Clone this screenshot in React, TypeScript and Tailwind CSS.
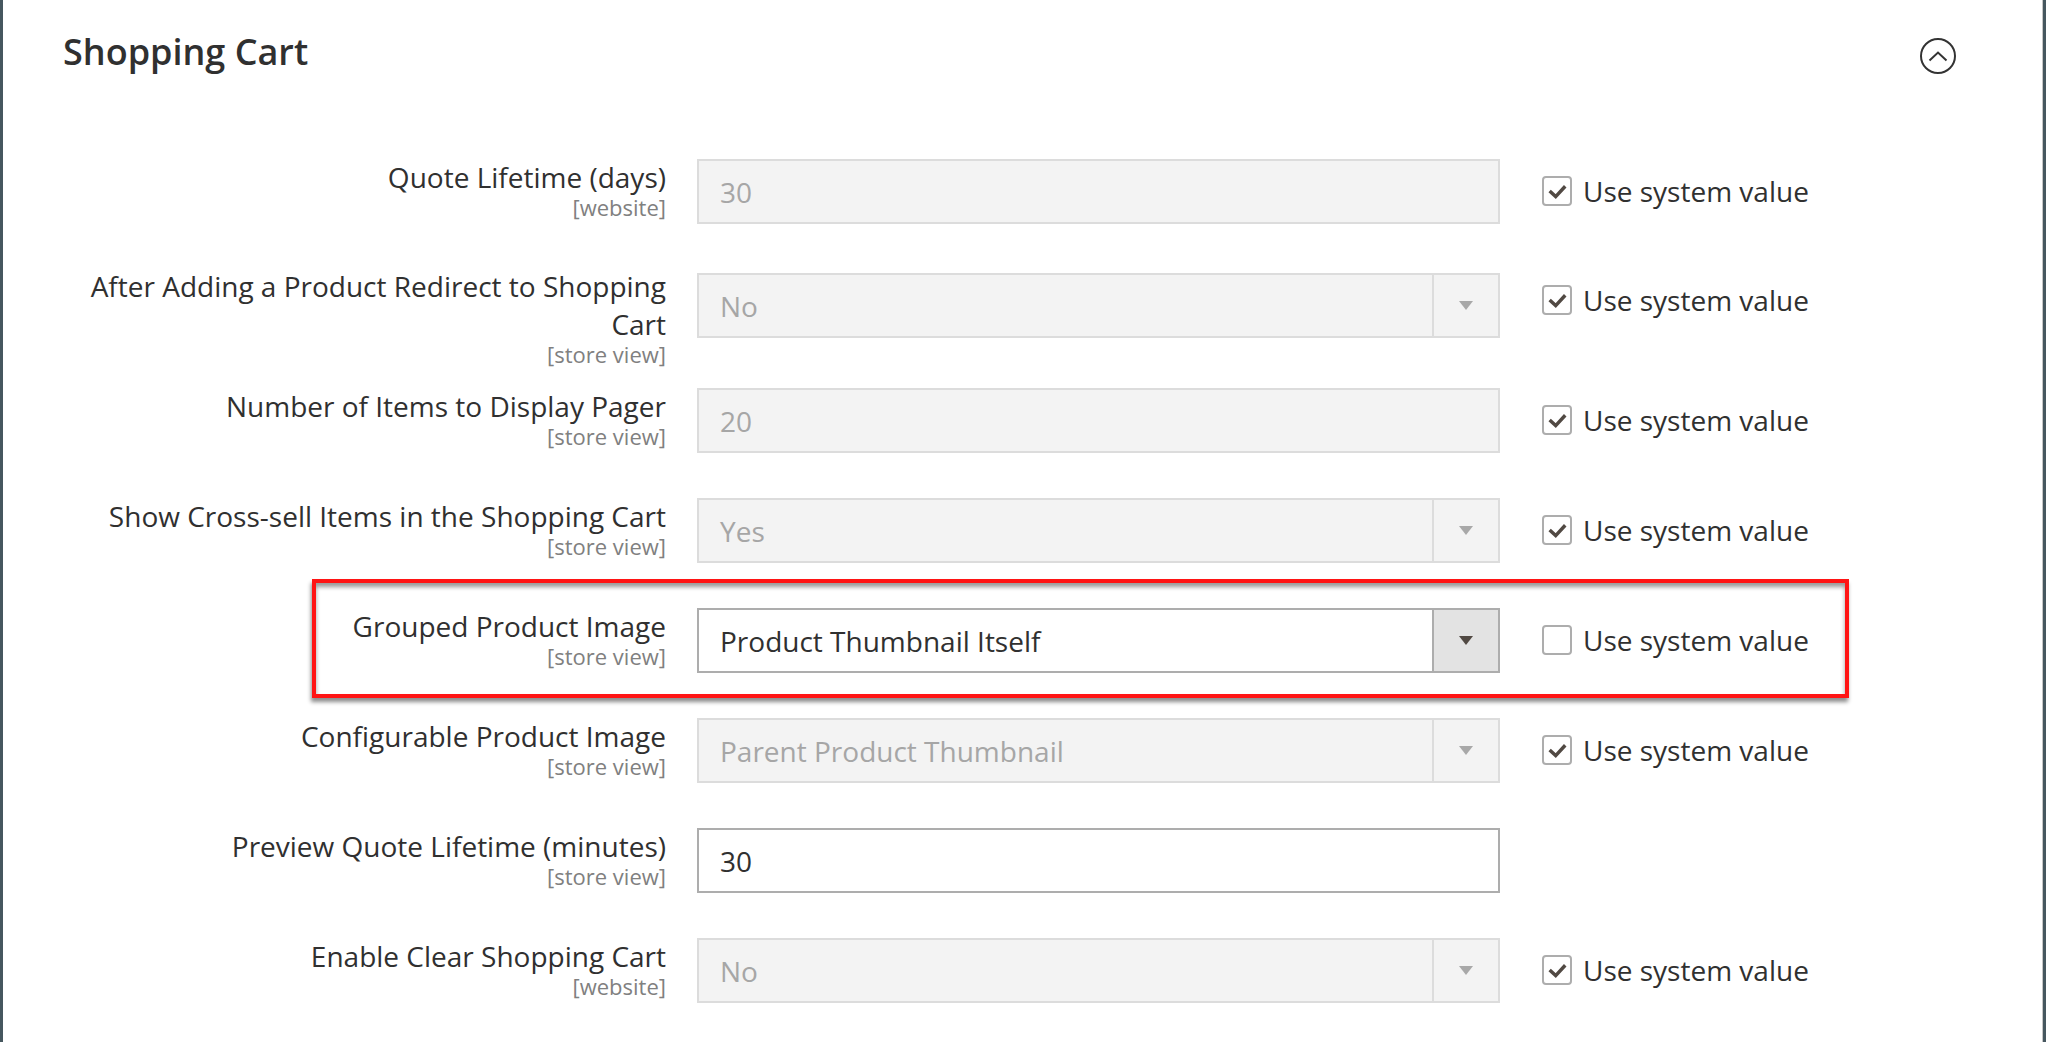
import React from "react";

type Row = {
  label: string;
  scope: string;
  kind: "input" | "select";
  value: string;
  disabled: boolean;
  checked?: boolean;
  rowClass: string;
  labelClass?: string;
  checkClass?: string;
  highlight?: boolean;
};

const ROWS: Row[] = [
  { label: "Quote Lifetime (days)", scope: "[website]", kind: "input", value: "30", disabled: true, checked: true, rowClass: "h-[114px]" },
  {
    label: "After Adding a Product Redirect to Shopping Cart",
    scope: "[store view]",
    kind: "select",
    value: "No",
    disabled: true,
    checked: true,
    rowClass: "h-[115px]",
    labelClass: "-mt-[6px]",
    checkClass: "mt-[8px]",
  },
  { label: "Number of Items to Display Pager", scope: "[store view]", kind: "input", value: "20", disabled: true, checked: true, rowClass: "h-[110px]" },
  { label: "Show Cross-sell Items in the Shopping Cart", scope: "[store view]", kind: "select", value: "Yes", disabled: true, checked: true, rowClass: "h-[110px]" },
  {
    label: "Grouped Product Image",
    scope: "[store view]",
    kind: "select",
    value: "Product Thumbnail Itself",
    disabled: false,
    checked: false,
    rowClass: "h-[110px]",
    highlight: true,
  },
  { label: "Configurable Product Image", scope: "[store view]", kind: "select", value: "Parent Product Thumbnail", disabled: true, checked: true, rowClass: "h-[110px]" },
  { label: "Preview Quote Lifetime (minutes)", scope: "[store view]", kind: "input", value: "30", disabled: false, rowClass: "h-[110px]" },
  { label: "Enable Clear Shopping Cart", scope: "[website]", kind: "select", value: "No", disabled: true, checked: true, rowClass: "h-[110px]" },
];

const CollapseIcon = () => (
  <svg width="36" height="36" viewBox="0 0 36 36" fill="none">
    <circle cx="18" cy="18" r="17" stroke="#333" strokeWidth="2" />
    <path d="M9.5 22.5 18 14.5l8.5 8" stroke="#333" strokeWidth="2" />
  </svg>
);

const Checkbox = ({ checked }: { checked: boolean }) => (
  <div className="flex h-[30px] w-[30px] items-center justify-center rounded-[4px] border-2 border-[#adadad] bg-white">
    {checked && (
      <svg width="30" height="30" viewBox="0 0 30 30" fill="none">
        <path d="M6.5 15 13.5 21.5 24.5 9.5" stroke="#514943" strokeWidth="4" />
      </svg>
    )}
  </div>
);

const Control = ({ row }: { row: Row }) => {
  const box = row.disabled
    ? "border-[#dcdcdc] bg-[#f3f3f3] text-[#a6a6a6]"
    : "border-[#adadad] bg-white text-[#303030]";
  return (
    <div className={`ml-[31px] flex h-[65px] w-[803px] shrink-0 border-2 ${box}`}>
      <div className="flex flex-1 items-center pl-[21px] text-[28px]">{row.value}</div>
      {row.kind === "select" && (
        <div
          className={`flex w-[66px] items-center justify-center border-l-2 ${
            row.disabled ? "border-[#dcdcdc]" : "border-[#adadad] bg-[#e3e3e3]"
          }`}
        >
          <svg width="14" height="9" viewBox="0 0 14 9">
            <path d="M0 0h14L7 9z" fill={row.disabled ? "#a8a8a8" : "#514943"} />
          </svg>
        </div>
      )}
    </div>
  );
};

export default function App() {
  return (
    <div className="h-[1042px] w-full overflow-hidden border-x-[3px] border-[#46575f] bg-white font-['Open_Sans',sans-serif] text-[#303030]">
      <div className="h-full border-r border-[#c6c6c6]">
        <div className="flex items-start justify-between pt-[27px] pl-[60px] pr-[86px]">
          <h2 className="text-[36px] leading-[49px] font-semibold">Shopping Cart</h2>
          <div className="mt-[11px]">
            <CollapseIcon />
          </div>
        </div>

        <div className="mt-[83px] pl-[60px]">
          {ROWS.map((row, i) => (
            <div key={`${row.label}-${i}`} className={`relative flex items-start ${row.rowClass}`}>
              <div className={`w-[603px] shrink-0 text-right ${row.labelClass ?? "-mt-px"}`}>
                <div className="text-[28px] leading-[38px]">{row.label}</div>
                <div className="text-[22px] leading-[22px] text-[#808080]">{row.scope}</div>
              </div>
              <Control row={row} />
              {row.checked !== undefined && (
                <div className={`ml-[42px] flex h-[38px] items-center gap-[11px] ${row.checkClass ?? "mt-[13px]"}`}>
                  <Checkbox checked={row.checked} />
                  <span className="text-[28px] leading-[38px]">Use system value</span>
                </div>
              )}
              {row.highlight && (
                <div className="pointer-events-none absolute -top-[29px] left-[249px] h-[119px] w-[1537px] border-4 border-[#ff1414] shadow-[-1px_4px_4px_rgba(0,0,0,0.45),inset_0_4px_4px_rgba(0,0,0,0.4)]" />
              )}
            </div>
          ))}
        </div>
      </div>
    </div>
  );
}
